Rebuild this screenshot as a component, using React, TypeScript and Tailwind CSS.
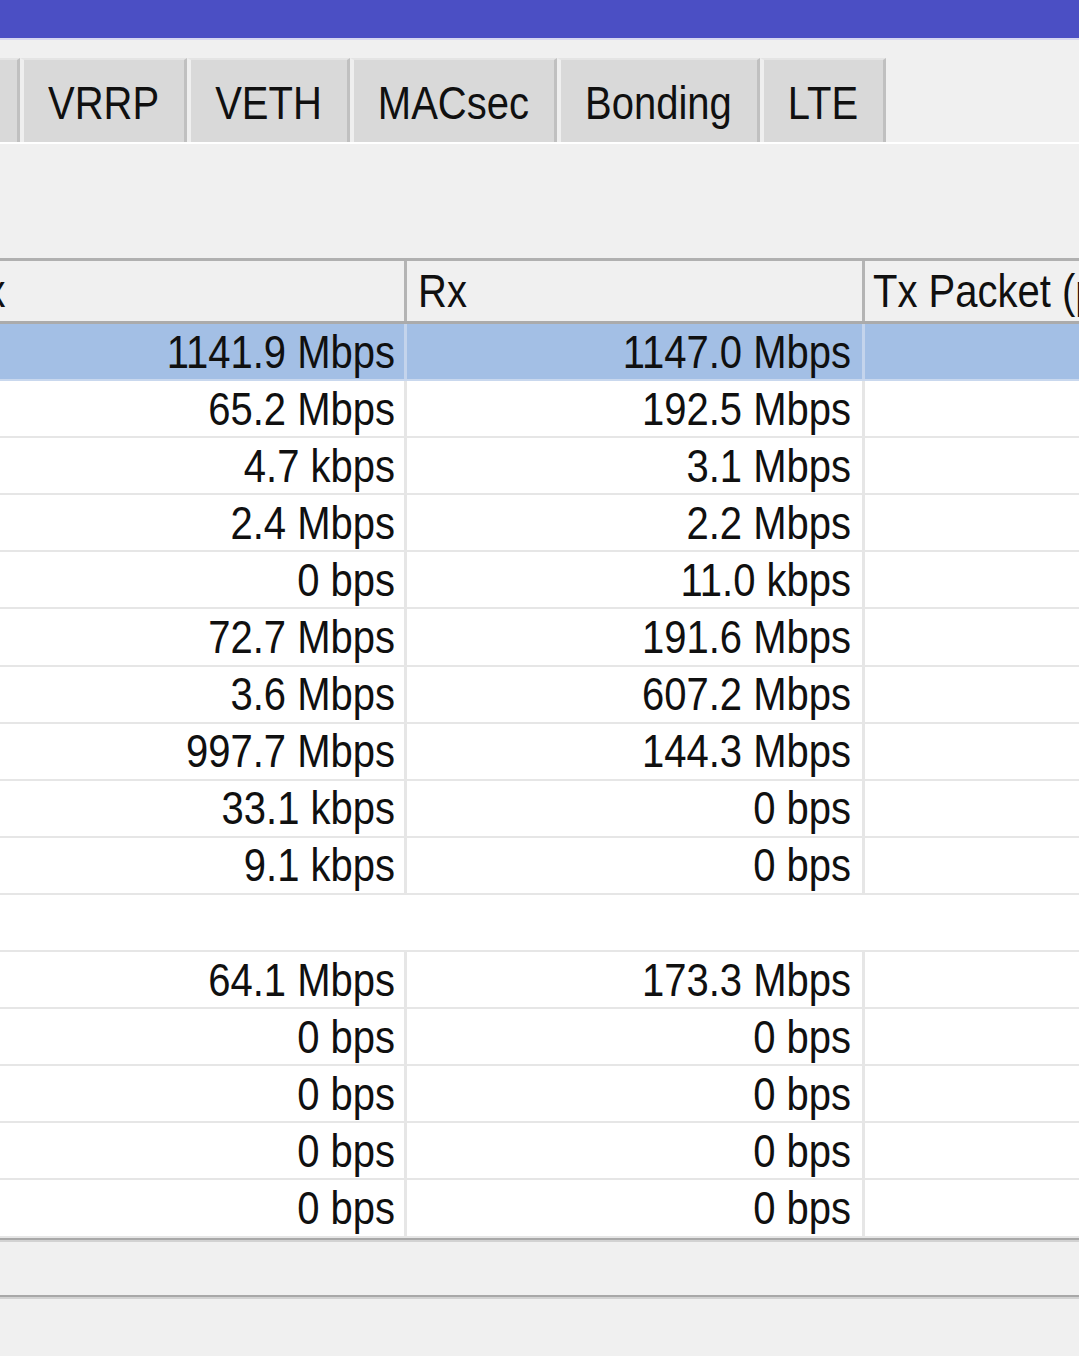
import React from 'react';

const tabs = ['VRRP', 'VETH', 'MACsec', 'Bonding', 'LTE'];

// null = empty spacer row
const rows: ([string, string] | null)[] = [
  ['1141.9 Mbps', '1147.0 Mbps'],
  ['65.2 Mbps', '192.5 Mbps'],
  ['4.7 kbps', '3.1 Mbps'],
  ['2.4 Mbps', '2.2 Mbps'],
  ['0 bps', '11.0 kbps'],
  ['72.7 Mbps', '191.6 Mbps'],
  ['3.6 Mbps', '607.2 Mbps'],
  ['997.7 Mbps', '144.3 Mbps'],
  ['33.1 kbps', '0 bps'],
  ['9.1 kbps', '0 bps'],
  null,
  ['64.1 Mbps', '173.3 Mbps'],
  ['0 bps', '0 bps'],
  ['0 bps', '0 bps'],
  ['0 bps', '0 bps'],
  ['0 bps', '0 bps'],
];

function Txt({ children }: { children: React.ReactNode }) {
  return <span className="inline-block scale-y-[1.15] leading-none whitespace-nowrap">{children}</span>;
}

export default function App() {
  return (
    <div
      className="w-[1079px] h-[1356px] overflow-hidden bg-[#f0f0f0] text-[#101010] text-[40px] flex flex-col"
      style={{ fontFamily: '"Liberation Sans", Arial, sans-serif' }}
    >
      {/* Title bar */}
      <div className="h-[40px] shrink-0 bg-[#4b4fc4] border-b-2 border-[#d6d7f0]" />

      {/* Tabs */}
      <div className="h-[102px] shrink-0 flex items-end pt-[18px]">
        <div className="h-[84px] w-[20px] bg-[#d9d9d9] border-r-[3px] border-[#c0c0c0] border-t-2 border-t-[#e4e4e4]" />
        {tabs.map((t) => (
          <div
            key={t}
            className="h-[84px] flex items-center pl-6 pr-[25px] pt-[3px] bg-[#d9d9d9] border-l-[4px] border-l-[#efefef] border-r-[3px] border-r-[#c0c0c0] border-t-2 border-t-[#e4e4e4]"
          >
            <Txt>{t}</Txt>
          </div>
        ))}
      </div>

      {/* Toolbar area */}
      <div className="h-[116px] shrink-0 border-t-2 border-white" />

      {/* Table */}
      <div className="-ml-[50px] flex flex-col">
        {/* Header */}
        <div className="h-[66px] flex border-t-[3px] border-t-[#b0b0b0] border-b-[3px] border-b-[#ababab] bg-[#f0f0f0]">
          <div className="w-[457px] shrink-0 flex items-center pl-[11px] border-r-[3px] border-[#b4b4b4]">
            <Txt>Tx</Txt>
          </div>
          <div className="w-[458px] shrink-0 flex items-center pl-[11px] border-r-[3px] border-[#b4b4b4]">
            <Txt>Rx</Txt>
          </div>
          <div className="flex-1 flex items-center pl-[8px] overflow-hidden">
            <Txt>Tx Packet (p/s)</Txt>
          </div>
        </div>

        {/* Body */}
        {rows.map((r, i) => {
          if (!r) {
            return <div key={i} className="h-[57.1px] bg-white border-b-2 border-[#e6e6e6]" />;
          }
          const sel = i === 0;
          const sep = sel ? 'border-[#c4d4ec]' : 'border-[#e6e6e6]';
          return (
            <div
              key={i}
              className={`h-[57.1px] flex border-b-2 ${sel ? 'bg-[#a3bfe5] border-[#c9d8ee]' : 'bg-white border-[#e6e6e6]'}`}
            >
              <div className={`w-[457px] shrink-0 flex items-center justify-end pr-[9px] border-r-[3px] ${sep}`}>
                <Txt>{r[0]}</Txt>
              </div>
              <div className={`w-[458px] shrink-0 flex items-center justify-end pr-[11px] border-r-[3px] ${sep}`}>
                <Txt>{r[1]}</Txt>
              </div>
              <div className="flex-1" />
            </div>
          );
        })}
      </div>

      {/* Status area */}
      <div className="h-[2px] shrink-0 bg-[#a8a8a8]" />
      <div className="h-[2px] shrink-0 bg-[#d2d2d2]" />
      <div className="h-[53px] shrink-0" />
      <div className="h-[2px] shrink-0 bg-[#a8a8a8]" />
      <div className="h-[2px] shrink-0 bg-[#d2d2d2]" />
      <div className="flex-1" />
    </div>
  );
}
